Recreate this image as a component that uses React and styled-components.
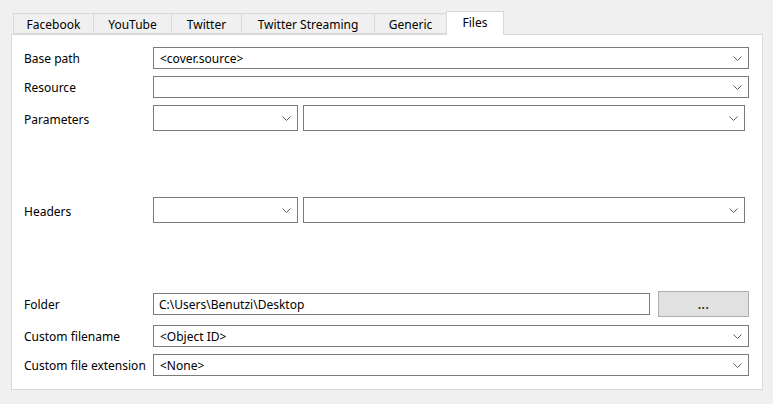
import React from "react";
import styled, { createGlobalStyle } from "styled-components";

const Global = createGlobalStyle`
  html, body { margin: 0; padding: 0; background: #f0f0f0; }
  body { font-family: "Noto Sans", "Open Sans", sans-serif; font-size: 12px; color: #000; }
  * { box-sizing: border-box; }
`;

const Page = styled.div`
  width: 773px;
  height: 404px;
  padding: 11px 0 0 11px;
  background: #f0f0f0;
  overflow: hidden;
`;

const TabStrip = styled.div`
  display: flex;
  align-items: flex-end;
  height: 23px;
  padding-left: 2px;
  position: relative;
  z-index: 2;
`;

const Tab = styled.div`
  width: ${(p) => p.$w}px;
  height: ${(p) => (p.$active ? 24 : 21)}px;
  margin-left: ${(p) => (p.$first ? 0 : -1)}px;
  margin-bottom: ${(p) => (p.$active ? -1 : 0)}px;
  border: 1px solid #d9d9d9;
  border-bottom: ${(p) => (p.$active ? "none" : "1px solid #d9d9d9")};
  background: ${(p) => (p.$active ? "#ffffff" : "#f0f0f0")};
  display: flex;
  align-items: center;
  justify-content: center;
  padding-bottom: ${(p) => (p.$active ? 2 : 0)}px;
  padding-top: ${(p) => (p.$active ? 0 : 1)}px;
  white-space: nowrap;
  font-size: 12px;
`;

const Panel = styled.div`
  width: 752px;
  height: 356px;
  background: #fff;
  border: 1px solid #d9d9d9;
  padding: 12px 13px 0 12px;
  display: flex;
  flex-direction: column;
`;

const Row = styled.div`
  display: grid;
  grid-template-columns: 129px 1fr;
  align-items: center;
  height: ${(p) => p.$h}px;
  margin-top: ${(p) => p.$mt || 0}px;
`;

const Label = styled.div`
  white-space: nowrap;
  line-height: 16px;
  padding-top: ${(p) => p.$pt ?? 2}px;
`;

const Combo = styled.div`
  height: ${(p) => p.$h || 22}px;
  width: ${(p) => (p.$w ? `${p.$w}px` : "auto")};
  flex: ${(p) => (p.$w ? "none" : "1")};
  border: 1px solid #7a7a7a;
  background: #fff;
  display: flex;
  align-items: center;
  padding: 0 6px 0 6px;
  font-size: 12px;
  white-space: nowrap;
`;

const ComboText = styled.span`
  flex: 1;
`;

const Pair = styled.div`
  display: flex;
  gap: 5px;
  margin-right: 4px;
`;

const FolderLine = styled.div`
  display: flex;
  align-items: center;
  gap: 8px;
`;

const TextBox = styled.div`
  flex: 1;
  height: 22px;
  border: 1px solid #7a7a7a;
  background: #fff;
  display: flex;
  align-items: center;
  padding: 0 5px;
  white-space: nowrap;
`;

const Button = styled.div`
  width: 91px;
  height: 26px;
  border: 1px solid #adadad;
  background: #e1e1e1;
  display: flex;
  align-items: center;
  justify-content: center;
  padding-top: 1px;
  letter-spacing: 0.5px;
  font-weight: 600;
  color: #222;
`;

const Chevron = () => (
  <svg width="9" height="5" viewBox="0 0 9 5" style={{ flex: "none" }}>
    <path d="M0.5 0.5 L4.5 4.5 L8.5 0.5" fill="none" stroke="#5f5f5f" strokeWidth="1" />
  </svg>
);

const Select = ({ value, h, w }) => (
  <Combo $h={h} $w={w}>
    <ComboText>{value}</ComboText>
    <Chevron />
  </Combo>
);

const tabs = [
  { t: "Facebook", w: 81 },
  { t: "YouTube", w: 79 },
  { t: "Twitter", w: 71 },
  { t: "Twitter Streaming", w: 134 },
  { t: "Generic", w: 73 },
];

export default function App() {
  return (
    <Page>
      <Global />
      <TabStrip>
        {tabs.map((x, i) => (
          <Tab key={x.t} $w={x.w} $first={i === 0}>
            {x.t}
          </Tab>
        ))}
        <Tab $w={58} $active>
          Files
        </Tab>
      </TabStrip>
      <Panel>
        <Row $h={22}>
          <Label>Base path</Label>
          <Select value="<cover.source>" />
        </Row>
        <Row $h={22} $mt={7}>
          <Label>Resource</Label>
          <Select value="" />
        </Row>
        <Row $h={26} $mt={7}>
          <Label $pt={3}>Parameters</Label>
          <Pair>
            <Select value="" h={26} w={145} />
            <Select value="" h={26} />
          </Pair>
        </Row>
        <Row $h={26} $mt={66}>
          <Label $pt={3}>Headers</Label>
          <Pair>
            <Select value="" h={26} w={145} />
            <Select value="" h={26} />
          </Pair>
        </Row>
        <Row $h={26} $mt={68}>
          <Label>Folder</Label>
          <FolderLine>
            <TextBox>C:\Users\Benutzi\Desktop</TextBox>
            <Button>...</Button>
          </FolderLine>
        </Row>
        <Row $h={22} $mt={8}>
          <Label>Custom filename</Label>
          <Select value="<Object ID>" />
        </Row>
        <Row $h={22} $mt={7}>
          <Label>Custom file extension</Label>
          <Select value="<None>" />
        </Row>
      </Panel>
    </Page>
  );
}
